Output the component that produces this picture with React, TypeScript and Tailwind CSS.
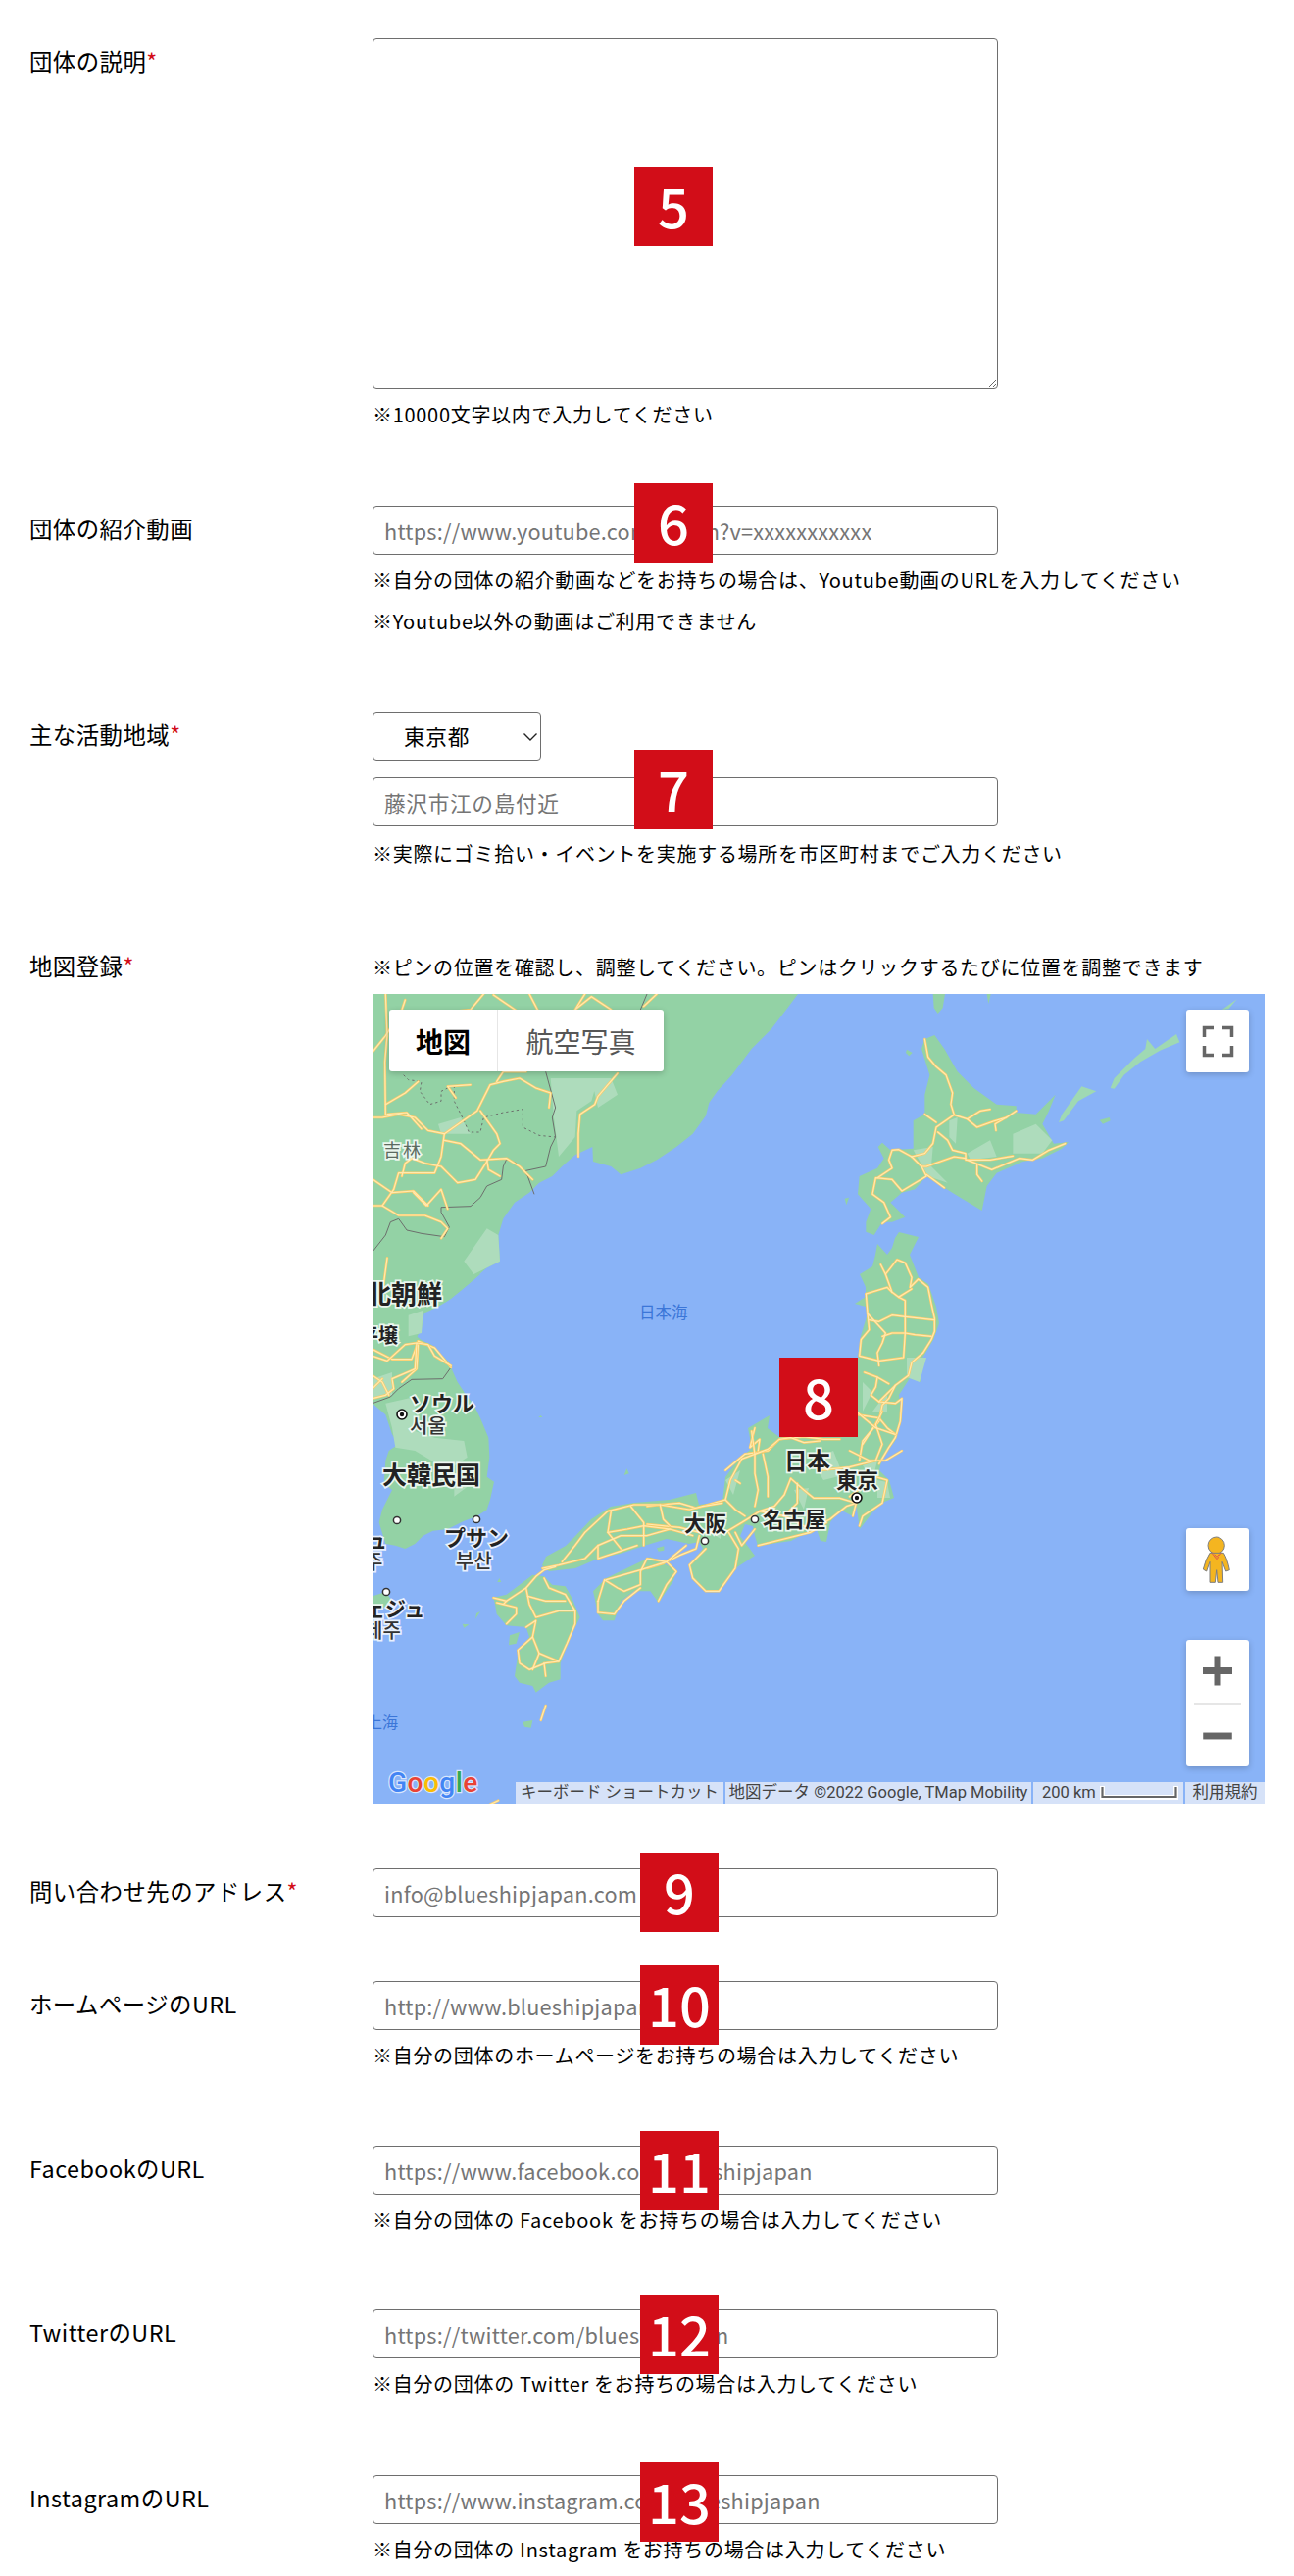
import React from "react";

const Z = ({ x, y, children }: { x: number; y: number; children: React.ReactNode }) => (
  <g transform={`translate(${x} ${y}) scale(${1 / 3})`}>{children}</g>
);

const Roads = ({ x, y, d }: { x: number; y: number; d: string[] }) => (
  <Z x={x} y={y}>
    <g fill="none" strokeLinejoin="round" strokeLinecap="round">
      {d.map((p, i) => (
        <path key={"o" + i} d={p} stroke="#fccb66" strokeWidth="7.5" />
      ))}
      {d.map((p, i) => (
        <path key={"i" + i} d={p} stroke="#ffeab0" strokeWidth="3.6" />
      ))}
    </g>
  </Z>
);

const LAND = "#93d2a5";
const LIGHT = "#aedcbc";

const Label = ({ x, y, size, children, weight = 700, fill = "#222", family = "Noto Sans CJK JP", halo = "#ffffffd0", ls = 0 }: { x: number; y: number; size: number; children: React.ReactNode; weight?: number; fill?: string; family?: string; halo?: string; ls?: number }) => (
  <text x={x} y={y} fontSize={size} fontWeight={weight} fill={fill} fontFamily={`${family}, sans-serif`} stroke={halo} strokeWidth="3.5" letterSpacing={ls} className="[paint-order:stroke]">
    {children}
  </text>
);

const Dot = ({ x, y }: { x: number; y: number }) => <circle cx={x} cy={y} r="3.6" fill="#fff" stroke="#333" strokeWidth="1.5" />;
const Bull = ({ x, y }: { x: number; y: number }) => (
  <g>
    <circle cx={x} cy={y} r="5" fill="#fff" stroke="#111" strokeWidth="1.6" />
    <circle cx={x} cy={y} r="2.2" fill="#111" />
  </g>
);

function MapArt() {
  return (
    <svg viewBox="380 1014 910 826" width="910" height="826" className="block">
      <rect x="380" y="1014" width="910" height="826" fill="#89b3f7" />
      {/* mainland */}
      <Z x={370} y={1000}>
        <path fill={LAND} d="M31,42 L1332,42 1300,85 1250,150 1190,210 1130,290 1085,340 1060,375 1050,415 1010,470 960,510 900,550 850,575 790,595 760,570 705,555 703,510 650,535 610,570 580,600 540,620 510,650 465,680 430,730 415,780 420,860 380,880 330,925 270,975 230,1000 185,1020 180,1070 165,1090 190,1110 240,1150 270,1185 290,1230 310,1260 L31,1260 Z" />
        <path fill={LIGHT} d="M575,300 L720,300 700,370 655,400 650,480 600,540 585,420 Z M40,1040 L180,1020 165,1090 100,1140 31,1150 Z M310,860 L380,760 415,780 420,860 340,900 Z M231,440 L300,420 330,470 240,470 Z M700,300 L760,300 780,350 720,390 Z" />
      </Z>
      {/* Korea */}
      <Z x={380} y={1300}>
        <path fill={LAND} d="M0,0 L330,0 270,50 225,85 160,110 150,160 135,195 180,215 235,270 245,310 275,355 310,400 330,440 355,500 358,560 350,620 372,635 360,690 350,720 L30,720 60,660 35,640 40,570 50,540 80,520 60,490 40,430 0,395 Z" />
        <path fill={LIGHT} d="M40,395 L130,375 130,480 190,500 280,510 290,560 230,600 130,540 70,530 60,470 Z M110,125 L155,110 150,180 110,190 Z M0,320 L60,300 60,370 0,380 Z M250,650 L290,650 250,680 Z" />
      </Z>
      <Z x={370} y={1420}>
        <path fill={LAND} d="M60,360 L381,360 350,380 310,395 260,420 215,425 185,440 160,465 130,480 100,470 70,465 50,400 Z M31,625 L70,612 90,640 60,662 31,662 Z M808,235 L815,250 800,255 Z M418,570 L424,582 412,582 Z M360,672 L345,695 348,678 Z M305,710 L325,712 310,722 Z M545,72 L550,78 538,78 Z" />
        {/* Kyushu */}
        <path fill={LAND} d="M400,630 L440,620 480,590 520,560 555,565 580,590 620,595 640,630 665,690 640,740 620,790 605,830 605,880 570,890 530,920 520,900 480,890 465,870 475,800 510,750 500,720 440,715 410,680 405,650 Z M450,745 L480,735 470,770 447,775 Z M490,1010 L520,1005 515,1028 495,1025 Z" />
        {/* Shikoku + Awaji */}
        <path fill={LAND} d="M705,610 L745,570 850,520 880,505 960,545 950,580 905,645 880,610 830,610 790,640 770,700 735,700 720,680 Z M900,478 L922,472 922,485 905,488 Z" />
      </Z>
      {/* Honshu */}
      <path fill={LAND} d="M553,1597 L557,1588 577,1577 587,1567 603,1550 623,1537 647,1533 683,1530 710,1523 713,1535 737,1532 740,1507 750,1493 767,1477 763,1457 785,1444 783,1457 795,1466 875,1387 878,1363 885,1340 883,1333 872,1330 883,1323 883,1313 877,1300 890,1292 893,1280 895,1269 905,1280 910,1273 913,1263 917,1257 937,1262 928,1280 937,1303 947,1310 955,1333 958,1350 952,1367 940,1387 937,1393 939,1410 930,1403 917,1423 920,1447 913,1470 900,1487 897,1500 907,1510 912,1528 900,1533 890,1543 877,1560 873,1533 870,1547 857,1540 847,1553 843,1573 837,1572 833,1560 823,1563 807,1572 773,1577 770,1567 768,1557 760,1555 755,1567 770,1587 750,1600 733,1623 720,1623 707,1610 703,1597 717,1580 713,1573 703,1575 680,1570 657,1577 633,1585 610,1590 587,1600 560,1603 Z" />
      <path fill={LIGHT} d="M925,1385 L945,1385 938,1410 925,1405 Z M890,1440 L905,1420 905,1440 Z M880,1410 L890,1420 880,1440 Z M828,1490 L850,1480 860,1505 840,1510 Z M810,1520 L825,1518 820,1540 Z M720,1560 L735,1550 735,1570 Z M880,1495 L895,1490 890,1510 Z M895,1510 L905,1512 908,1528 895,1528 Z M740,1510 L755,1500 748,1525 Z" />
      {/* Hokkaido & Kurils */}
      <Z x={830} y={1000}>
        <path fill={LAND} d="M340,180 L370,168 400,210 440,280 490,330 560,380 620,385 620,405 680,410 740,350 720,400 700,440 735,500 780,495 760,515 700,545 640,555 560,590 530,630 515,705 440,660 400,635 345,600 310,640 270,650 235,680 280,725 240,740 210,740 185,780 160,770 160,740 175,700 135,655 140,600 195,575 215,545 197,510 210,497 235,520 305,515 305,430 340,410 340,350 355,290 330,210 Z M285,212 L302,222 292,232 282,222 Z M95,668 L108,665 100,688 Z M365,42 L402,42 395,85 380,102 368,85 Z M530,42 L542,42 535,72 Z M875,428 L905,420 908,430 885,440 Z" />
        <path fill="#9fd9b3" d="M750,435 L760,410 820,325 865,340 810,370 765,430 Z M908,330 L920,300 980,240 1015,210 1020,180 1045,210 1110,165 1120,190 1060,215 1000,250 950,290 920,332 Z M1250,90 L1295,58 1270,88 Z" />
        <path fill={LIGHT} d="M610,470 L680,440 730,490 700,530 610,530 Z M470,530 L540,490 560,540 480,550 Z M305,520 L365,510 360,570 410,620 350,600 Z M415,430 L440,420 435,500 415,480 Z" />
      </Z>

      {/* borders */}
      <Z x={370} y={1000}>
        <g fill="none" stroke="#6c6f6c" strokeWidth="3">
          <path d="M525,655 505,600 490,580 470,560 440,548 430,570 425,610 380,630 360,665 330,692 240,695 240,710 265,755 250,785 180,775 135,765 110,730 85,740 70,780 31,830" />
          <path d="M490,585 560,570 575,510 590,480 580,420 590,390 560,280" />
          <path d="M850,90 870,42" />
          <path strokeDasharray="7 9" d="M125,290 140,305 180,310 175,340 205,380 240,370 240,340 280,320 280,370 310,430 325,465 360,465 370,420 430,405 490,395 490,450 540,475 590,480" />
        </g>
      </Z>
      <Z x={380} y={1300}>
        <path fill="none" stroke="#6c6f6c" strokeWidth="3" d="M240,285 215,320 120,322 80,350 55,375 0,395" />
      </Z>

      {/* roads */}
      <Roads x={370} y={1000} d={[
        "M31,420 60,420 110,410 160,420 200,460 250,470 350,400 390,320 430,310 480,300 530,330 575,345 570,390",
        "M250,470 240,540 220,590 110,590 95,640 60,690 31,690",
        "M250,490 300,500 360,550 440,545 480,570 520,610",
        "M360,400 410,470 420,500 400,520 380,555 345,610 290,620 260,590 240,570 190,560 150,545 130,560 120,600",
        "M380,550 385,580 420,600",
        "M60,690 110,720 190,720 240,740 260,760 240,790",
        "M155,650 195,690 240,640 260,700",
        "M31,610 90,650 155,645 200,690",
        "M30,220 70,170 120,90 130,60",
        "M70,40 75,170 68,250 70,410",
        "M70,380 130,345 170,310",
        "M75,410 135,405 180,455",
        "M330,320 260,325 285,360",
        "M410,310 430,280 500,280",
        "M780,285 720,355 710,380 665,410 660,470 660,540",
        "M370,42 330,90 240,100",
        "M510,42 540,100",
        "M680,42 650,90 700,50 760,90",
        "M400,45 480,100",
        "M900,42 860,80",
        "M170,1105 150,1160 90,1160 31,1130",
        "M170,1105 220,1125 270,1185",
        "M170,1105 165,1190 120,1230",
        "M75,850 60,960",
      ]} />
      <Roads x={380} y={1300} d={[
        "M0,250 45,265 100,215 135,210 170,215 190,250 240,280",
        "M135,210 130,290 60,320 65,350 40,370 0,380",
        "M0,310 30,330 50,370",
        "M0,350 30,320",
      ]} />
      <Roads x={830} y={1000} d={[
        "M340,180 350,235 375,265 405,290 425,345 420,380 430,412 375,450 365,500 340,530 300,540",
        "M340,410 375,435",
        "M430,412 470,425 510,400 540,395",
        "M470,425 500,450 550,432 590,420 620,400",
        "M590,420 555,440 558,460",
        "M380,465 410,490 425,520 465,530 465,550 540,550 610,538",
        "M330,570 345,570 430,540 465,545",
        "M300,540 330,570 345,600 270,645 240,610 190,605 180,655 215,680 235,725 210,745",
        "M300,540 260,518 240,520 230,550 240,575 195,605",
        "M345,595 400,635",
        "M470,550 545,580 630,545 670,550 720,520 770,500",
        "M500,565 500,595 515,615",
      ]} />
      <Roads x={740} y={1260} d={[
        "M475,90 490,120 525,75 550,85 570,130 565,160 590,135 620,160 630,210 640,255 640,295 630,320 605,360 570,390 560,430 520,460 500,500 480,520 470,570 420,630 410,690",
        "M490,120 510,175 530,190 570,165",
        "M430,180 495,160 510,175",
        "M430,180 435,240 490,300 480,330 465,360 470,400",
        "M435,240 440,290 415,320 410,370 470,385 545,375 550,300 550,200 530,190",
        "M440,260 470,265 510,245 550,250 640,260",
        "M480,310 510,300 550,300 580,305 630,310",
        "M425,420 465,435 460,465 445,490 470,510 520,515 540,500 535,570 520,620 500,650 470,700",
        "M470,510 520,460",
        "M465,435 500,455",
        "M405,550 470,560 495,590 520,610",
        "M465,570 420,640",
        "M0,720 60,670 130,660 165,625 240,617 300,625 350,625",
        "M90,590 75,650 105,625 100,660",
      ]} />
      <Roads x={660} y={1440} d={[
        "M0,345 100,355 160,370 240,370 290,340 345,305 420,320 500,360 560,330 610,290 640,280",
        "M0,290 40,285 100,280 150,295 240,270 270,300 300,320",
        "M240,270 255,210 290,145 370,115 405,85 440,80 480,95 530,90",
        "M330,130 330,190 340,240 330,290",
        "M355,130 370,200 370,260",
        "M270,210 285,220",
        "M320,60 330,130",
        "M440,205 420,255 390,290 345,305",
        "M440,205 480,240 510,265 590,265 640,280",
        "M460,220 460,280 420,320",
        "M530,180 620,170 700,150 720,100 700,40 720,0",
        "M620,120 680,150 730,150 780,120",
        "M640,0 700,50 760,70",
        "M620,260 700,200 735,210 720,280 660,320 650,350",
        "M640,280 630,320",
        "M270,370 290,410 330,360",
        "M340,410 420,390 500,370 550,340",
        "M160,380 150,420 100,440 50,465 0,480",
        "M180,420 130,470 140,510 180,550 220,550 270,480 280,420 250,370",
      ]} />
      <Roads x={370} y={1420} d={[
        "M550,540 600,530 680,510 720,470 790,440 870,440 940,420 1010,440",
        "M610,520 650,470 680,430 750,365 830,345 910,345 1000,360 1040,350 1100,340",
        "M760,365 750,430 790,480",
        "M820,350 860,400 860,470",
        "M750,430 810,420 860,410 940,420",
        "M910,345 920,390 940,410",
        "M720,470 720,510 780,490 840,470",
        "M720,640 740,575 780,600 800,610 850,590 850,550 870,510 930,520 960,550 930,590 905,640",
        "M745,575 850,545 930,520",
        "M720,675 770,680 800,640 850,600",
        "M720,640 720,675",
        "M930,520 990,470",
        "M400,630 440,640 500,600 530,565 555,545 590,535",
        "M555,570 570,600 620,620 650,670 650,710 625,770 600,825 560,830 510,850 480,830 475,790 520,750 530,700 500,720",
        "M500,600 510,650 530,690 600,670 650,670",
        "M440,640 430,650 410,645 470,660 470,680 440,710",
        "M505,625 560,640 620,640",
        "M520,750 540,800 600,825",
        "M540,800 520,850",
        "M555,830 560,870",
        "M560,960 545,1005",
        "M415,1250 390,1262",
      ]} />

      {/* labels */}
      <Label x={391} y={1180} size={18} weight={400} fill="#5c6a60" ls={2}>吉林</Label>
      <Label x={373} y={1330} size={26}>北朝鮮</Label>
      <Label x={366} y={1370} size={20}>平壌</Label>
      <Label x={652} y={1345} size={16.5} weight={400} fill="#3b76d8" halo="#0000">日本海</Label>
      <Label x={418} y={1440} size={22}>ソウル</Label>
      <Label x={418} y={1462} size={20} weight={500} fill="#333" family="Noto Sans CJK KR">서울</Label>
      <Label x={390} y={1514} size={25}>大韓民国</Label>
      <Label x={453} y={1577} size={22}>プサン</Label>
      <Label x={465} y={1600} size={20} weight={500} fill="#333" family="Noto Sans CJK KR">부산</Label>
      <Label x={374} y={1579} size={21}>ュ</Label>
      <Label x={372} y={1601} size={20} weight={500} fill="#333" family="Noto Sans CJK KR">주</Label>
      <Label x={372} y={1649} size={21}>ェジュ</Label>
      <Label x={372} y={1671} size={20} weight={500} fill="#333" family="Noto Sans CJK KR">제주</Label>
      <Label x={374} y={1763} size={16} weight={400} fill="#3b76d8" halo="#0000">上海</Label>
      <Label x={800} y={1499} size={23.5}>日本</Label>
      <Label x={853} y={1518} size={21.5}>東京</Label>
      <Label x={698} y={1562} size={21.5}>大阪</Label>
      <Label x={778} y={1558} size={21.5}>名古屋</Label>
      <Dot x={719} y={1572} />
      <Dot x={770} y={1550} />
      <Dot x={486} y={1550} />
      <Dot x={405} y={1551} />
      <Dot x={394} y={1624} />
      <Bull x={874} y={1528} />
      <Bull x={410} y={1443} />

      {/* Google wordmark as real text */}
      <text x="396" y="1828" fontSize="28" fontWeight="500" fontFamily="Roboto, sans-serif" stroke="#ffffffb0" strokeWidth="2.5" className="[paint-order:stroke]">
        <tspan fill="#4285f4">G</tspan>
        <tspan fill="#ea4335">o</tspan>
        <tspan fill="#fbbc05">o</tspan>
        <tspan fill="#4285f4">g</tspan>
        <tspan fill="#34a853">l</tspan>
        <tspan fill="#ea4335">e</tspan>
      </text>
    </svg>
  );
}

const ctrl = "absolute rounded-[3px] bg-white shadow-[0_2px_6px_rgba(0,0,0,0.2)]";

function GoogleMap() {
  return (
    <div className="relative mt-[11px] h-[826px] w-[910px] overflow-hidden">
      <MapArt />
      {/* map type */}
      <div className={`${ctrl} left-[17px] top-[16px] flex h-[63px] w-[280px] items-center text-[28px] tracking-normal`}>
        <div className="flex h-full w-[111px] items-center justify-center border-r border-[#e6e6e6] font-bold text-black">地図</div>
        <div className="flex h-full flex-1 items-center justify-center text-[#565656]">航空写真</div>
      </div>
      {/* fullscreen */}
      <div className={`${ctrl} left-[830px] top-[16px] h-[64px] w-[64px]`}>
        <svg viewBox="0 0 64 64" width="64" height="64">
          <path fill="none" stroke="#666" strokeWidth="3.5" d="M18.5,28 V18.5 H28 M37,18.5 H46.5 V28 M46.5,37 V46.5 H37 M28,46.5 H18.5 V37" />
        </svg>
      </div>
      {/* pegman */}
      <div className={`${ctrl} left-[830px] top-[545px] h-[64px] w-[64px]`}>
        <svg viewBox="1050 417 192 192" width="64" height="64">
          <circle cx="1142" cy="470" r="26" fill="#f4b520" stroke="#7e7e7e" strokeWidth="3" />
          <path fill="#f4b520" stroke="#7e7e7e" strokeWidth="3" d="M1122,493 L1165,493 Q1176,510 1183,545 L1172,549 L1161,520 L1163,583 L1146,583 L1142,545 L1138,583 L1122,583 L1122,520 L1112,549 L1102,543 Q1110,510 1122,493 Z" />
          <path fill="none" stroke="#e0574a" strokeWidth="3" d="M1128,493 L1143,512 L1158,493 M1136,497 L1143,505 L1150,497" />
        </svg>
      </div>
      {/* zoom */}
      <div className={`${ctrl} left-[830px] top-[659px] flex h-[129px] w-[64px] flex-col items-center`}>
        <svg viewBox="0 0 64 64" width="64" height="64" className="shrink-0">
          <path fill="#666" d="M17,28 H28.5 V16.5 H35.5 V28 H47 V35 H35.5 V46.5 H28.5 V35 H17 Z" />
        </svg>
        <div className="h-[2px] w-[48px] shrink-0 bg-[#e6e6e6]" />
        <svg viewBox="0 0 64 64" width="64" height="63" className="shrink-0">
          <rect x="17" y="29" width="30" height="7" fill="#666" />
        </svg>
      </div>
      {/* attribution */}
      <div className="absolute bottom-0 right-0 flex h-[22px] items-center gap-[2px] font-['Roboto','Noto_Sans_CJK_JP',sans-serif] text-[16.5px] leading-[22px] tracking-normal text-[#444]">
        <div className="flex h-full w-[212px] items-center justify-center bg-[#d6e2f8] whitespace-nowrap">キーボード ショートカット</div>
        <div className="flex h-full w-[312px] items-center justify-center bg-[#d6e2f8] whitespace-nowrap">地図データ ©2022 Google, TMap Mobility</div>
        <div className="flex h-full w-[153px] items-center gap-[4px] bg-[#d6e2f8] pl-[9px] whitespace-nowrap">
          <span>200 km</span>
          <svg width="80" height="14" viewBox="0 0 80 14">
            <path fill="none" stroke="#fff" strokeWidth="5" d="M2.5,0 V11.5 H77.5 V0" />
            <path fill="none" stroke="#666" strokeWidth="2.2" d="M2.5,1 V11 H77.5 V1" />
          </svg>
        </div>
        <div className="flex h-full w-[81px] items-center justify-center bg-[#d6e2f8] whitespace-nowrap">利用規約</div>
      </div>
    </div>
  );
}

const Badge = ({ className, children }: { className: string; children: React.ReactNode }) => (
  <div className={`absolute z-10 flex h-[81px] w-[80px] items-center justify-center bg-[#d20d18] pb-[3px] text-[56px] font-medium leading-none tracking-normal text-white ${className}`}>
    {children}
  </div>
);

const Req = () => <span className="text-[#d20d18]">*</span>;

const Lbl = ({ children }: { children: React.ReactNode }) => (
  <div className="w-[380px] shrink-0 pl-[30px] pt-[6px] text-[23.4px] leading-[34px]">{children}</div>
);

const Hint = ({ children, className = "mt-[10px]" }: { children: React.ReactNode; className?: string }) => (
  <p className={`h-[32px] whitespace-nowrap text-[20px] leading-[32px] tracking-[0.035em] ${className}`}>{children}</p>
);

const Field = ({ placeholder, cjk = false }: { placeholder: string; cjk?: boolean }) => (
  <input
    readOnly
    placeholder={placeholder}
    className={`block h-[50px] w-[638px] rounded-[4px] border border-[#6e6e6e] bg-white px-[11px] text-[21.7px] outline-none placeholder:text-[#757575] ${cjk ? "tracking-[0.03em]" : "tracking-[0.01em]"}`}
  />
);

export default function App() {
  return (
    <div className="h-[2628px] overflow-hidden bg-white pt-[39px] font-['Noto_Sans_CJK_JP',sans-serif] tracking-[0.03em] text-black">
      <div className="flex">
        <Lbl>団体の説明<Req /></Lbl>
        <div className="relative">
          <textarea readOnly className="block h-[358px] w-[638px] rounded-[4px] border border-[#6e6e6e] bg-white outline-none" />
          <Badge className="left-[267px] top-[131px]">5</Badge>
          <Hint>※10000文字以内で入力してください</Hint>
        </div>
      </div>

      <div className="mt-[77px] flex">
        <Lbl>団体の紹介動画</Lbl>
        <div className="relative">
          <Field placeholder="https://www.youtube.com/watch?v=xxxxxxxxxxx" />
          <Badge className="left-[267px] top-[-23px]">6</Badge>
          <Hint>※自分の団体の紹介動画などをお持ちの場合は、Youtube動画のURLを入力してください</Hint>
          <Hint>※Youtube以外の動画はご利用できません</Hint>
        </div>
      </div>

      <div className="mt-[76px] flex">
        <Lbl>主な活動地域<Req /></Lbl>
        <div className="relative">
          <select className="block h-[50px] w-[172px] appearance-none rounded-[4px] border border-[#6e6e6e] bg-white pl-[31px] text-[21.7px] tracking-[0.03em] text-black outline-none">
            <option>東京都</option>
          </select>
          <svg width="16" height="10" viewBox="0 0 16 10" className="absolute left-[153px] top-[21px]">
            <path fill="none" stroke="#222" strokeWidth="1.4" d="M1.5,1.5 L8,8 L14.5,1.5" />
          </svg>
          <div className="mt-[17px]">
            <Field cjk placeholder="藤沢市江の島付近" />
          </div>
          <Badge className="left-[267px] top-[39px]">7</Badge>
          <Hint className="mt-[12px]">※実際にゴミ拾い・イベントを実施する場所を市区町村までご入力ください</Hint>
        </div>
      </div>

      <div className="mt-[81px] flex">
        <div className="w-[380px] shrink-0 pl-[30px] text-[23.4px] leading-[34px]">地図登録<Req /></div>
        <div className="relative pt-[3px]">
          <Hint className="mt-0">※ピンの位置を確認し、調整してください。ピンはクリックするたびに位置を調整できます</Hint>
          <GoogleMap />
          <Badge className="left-[415px] top-[417px]">8</Badge>
        </div>
      </div>

      <div className="mt-[66px] flex">
        <Lbl>問い合わせ先のアドレス<Req /></Lbl>
        <div className="relative">
          <Field placeholder="info@blueshipjapan.com" />
          <Badge className="left-[273px] top-[-16px]">9</Badge>
        </div>
      </div>

      <div className="mt-[65px] flex">
        <Lbl>ホームページのURL</Lbl>
        <div className="relative">
          <Field placeholder="http://www.blueshipjapan.com" />
          <Badge className="left-[273px] top-[-16px]">10</Badge>
          <Hint>※自分の団体のホームページをお持ちの場合は入力してください</Hint>
        </div>
      </div>

      <div className="mt-[76px] flex">
        <Lbl>FacebookのURL</Lbl>
        <div className="relative">
          <Field placeholder="https://www.facebook.com/blueshipjapan" />
          <Badge className="left-[273px] top-[-15px]">11</Badge>
          <Hint>※自分の団体の Facebook をお持ちの場合は入力してください</Hint>
        </div>
      </div>

      <div className="mt-[75px] flex">
        <Lbl>TwitterのURL</Lbl>
        <div className="relative">
          <Field placeholder="https://twitter.com/blueshipjapan" />
          <Badge className="left-[273px] top-[-15px]">12</Badge>
          <Hint>※自分の団体の Twitter をお持ちの場合は入力してください</Hint>
        </div>
      </div>

      <div className="mt-[77px] flex">
        <Lbl>InstagramのURL</Lbl>
        <div className="relative">
          <Field placeholder="https://www.instagram.com/blueshipjapan" />
          <Badge className="left-[273px] top-[-13px]">13</Badge>
          <Hint>※自分の団体の Instagram をお持ちの場合は入力してください</Hint>
        </div>
      </div>
    </div>
  );
}
